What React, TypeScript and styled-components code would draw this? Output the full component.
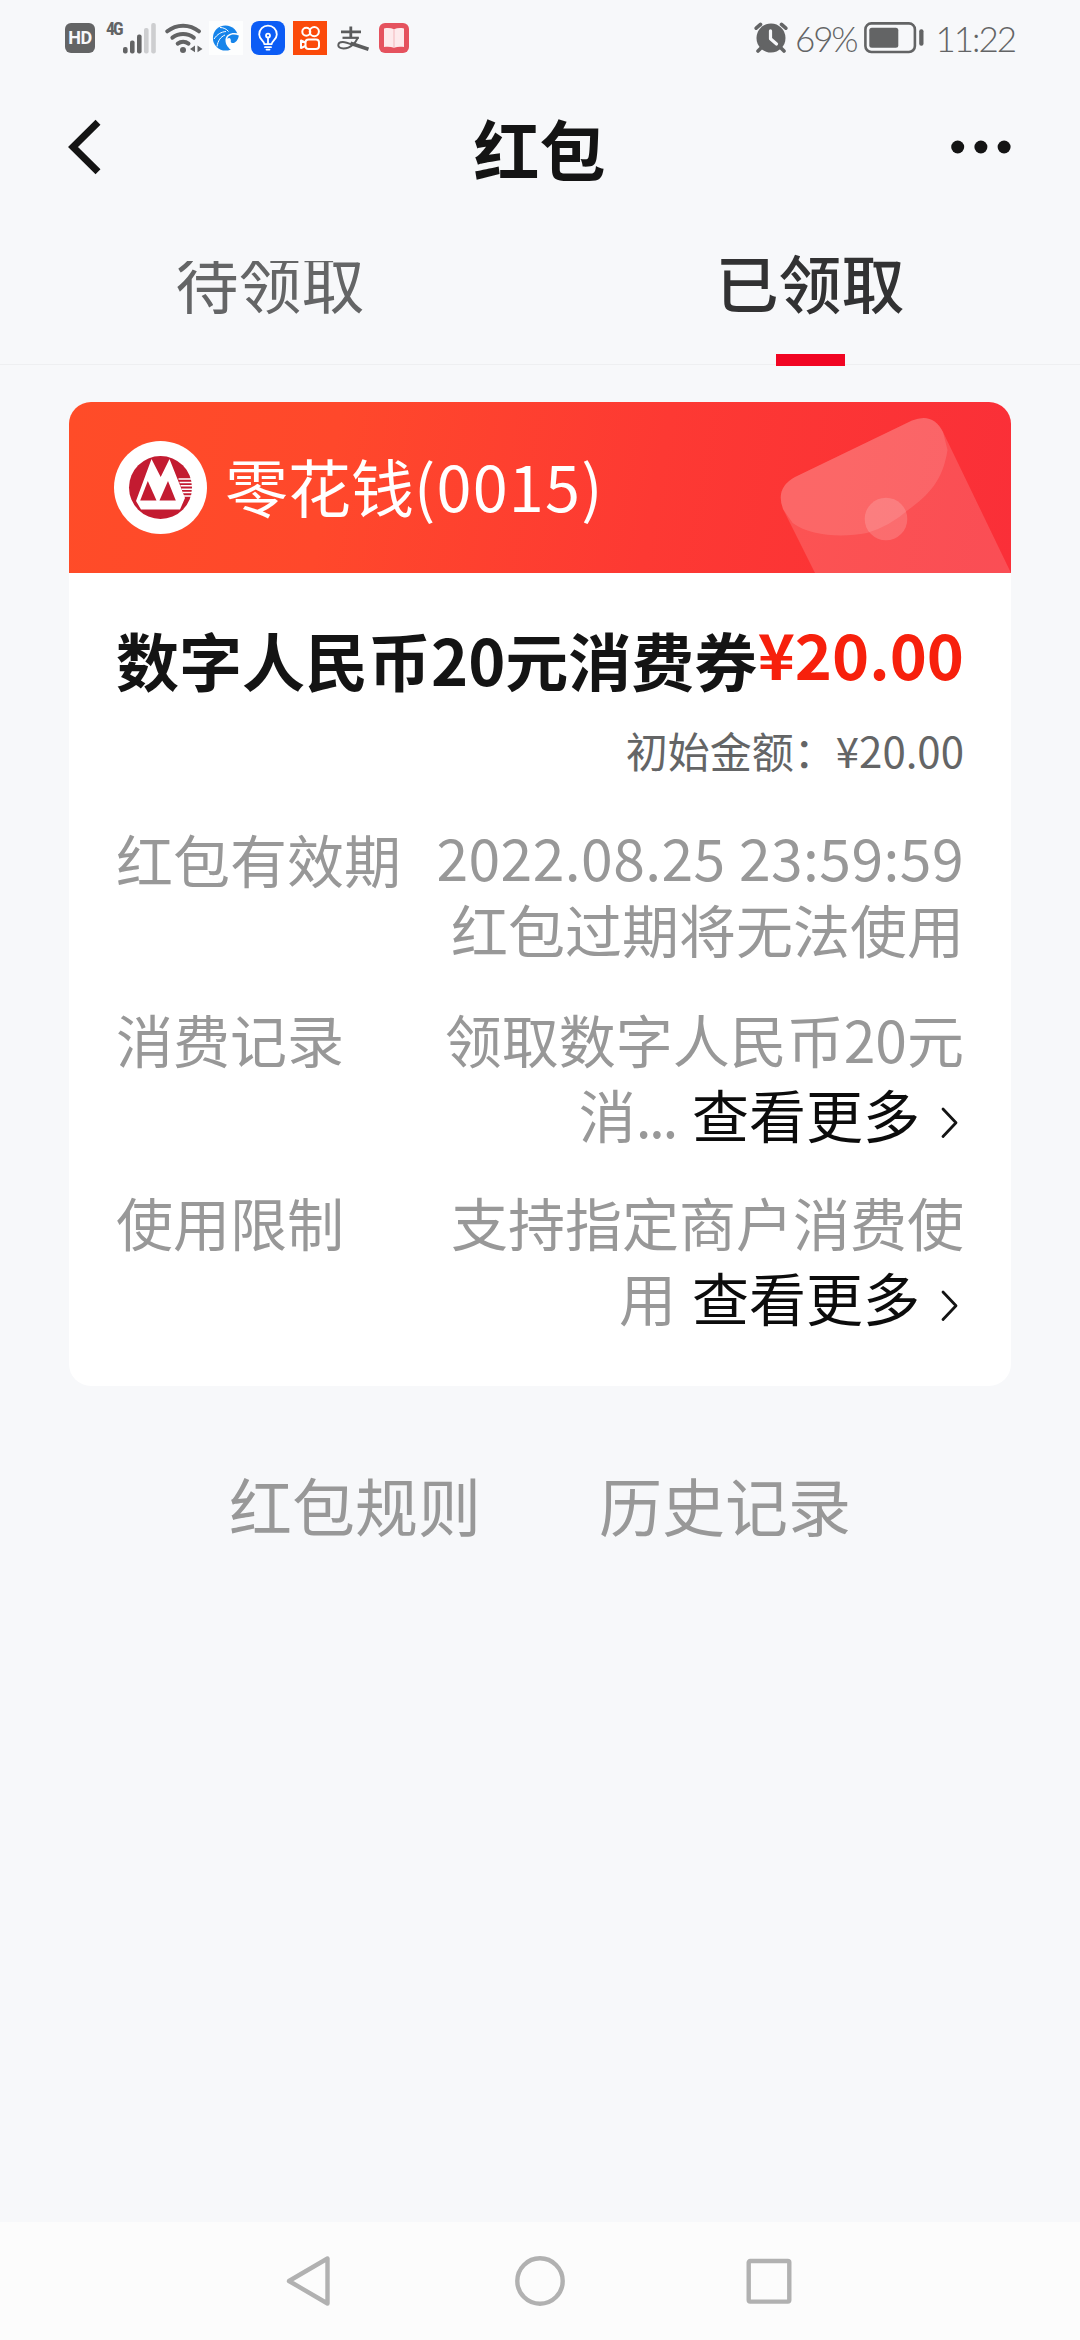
import React from "react";
import styled, { createGlobalStyle } from "styled-components";

const GlobalStyle = createGlobalStyle`
  * { box-sizing: border-box; }
  html, body { margin: 0; padding: 0; background: #f7f8fa; }
  body { font-family: "Noto Sans CJK SC", "Noto Sans", sans-serif; color: #141414; }
  svg { display: block; flex: none; }
`;

const Screen = styled.div`
  display: flex;
  flex-direction: column;
  width: 1080px;
  height: 2340px;
  background: #f7f8fa;
  overflow: hidden;
`;

const StatusBar = styled.header`
  display: flex;
  justify-content: space-between;
  height: 75px;
  padding: 0 65px 0 65px;
  color: #636465;
`;

const StatusGroup = styled.div`
  display: flex;
  align-items: center;
  height: 75px;
`;

const IconSlot = styled.div<{ $gap: number }>`
  margin-left: ${(p) => p.$gap}px;
`;

const StatusText = styled.span<{ $gap: number; $spacing: number }>`
  margin-left: ${(p) => p.$gap}px;
  font-family: "Lato", "Noto Sans CJK SC", sans-serif;
  font-weight: 300;
  font-size: 35px;
  line-height: 75px;
  letter-spacing: ${(p) => p.$spacing}px;
  padding-top: 2px;
  white-space: nowrap;
`;

const HdBadge = styled.div`
  display: flex;
  align-items: center;
  justify-content: center;
  width: 30px;
  height: 30px;
  border-radius: 6px;
  background: #636465;
  color: #f7f8fa;
  font: 700 18px/30px "Roboto", sans-serif;
  letter-spacing: -0.5px;
`;

const NetworkLabel = styled.span`
  align-self: flex-start;
  margin: 20px 0 0 11px;
  width: 17px;
  font: 700 18px/18px "Roboto Condensed", "Roboto", sans-serif;
  letter-spacing: -2px;
`;

const NavBar = styled.nav`
  display: grid;
  grid-template-columns: 1fr auto 1fr;
  align-items: center;
  height: 144px;
  padding: 0 69px 0 68px;
`;

const NavTitle = styled.h1`
  margin: 0;
  font-size: 66px;
  line-height: 144px;
  font-weight: 700;
`;

const NavEnd = styled.div`
  justify-self: end;
`;

const Tabs = styled.div`
  display: grid;
  grid-template-columns: 1fr 1fr;
  height: 146px;
  border-bottom: 1px solid #eeeff1;
`;

const Tab = styled.div<{ $active?: boolean }>`
  display: flex;
  flex-direction: column;
  align-items: center;
  justify-content: space-between;
  padding-top: 42px;
  height: 147px;
  font-size: 63px;
  font-weight: ${(p) => (p.$active ? 500 : 400)};
  color: ${(p) => (p.$active ? "#323233" : "#646566")};
`;

const TabLabel = styled.span<{ $clipped?: boolean }>`
  line-height: 39px;
  padding-bottom: 24px;
  overflow: ${(p) => (p.$clipped ? "hidden" : "visible")};
`;

const TabIndicator = styled.i`
  width: 69px;
  height: 12px;
  background: #f10522;
`;

const Card = styled.section`
  margin: 37px 69px 0;
  height: 984px;
  border-radius: 22px;
  background: #fff;
  overflow: hidden;
`;

const CardHeader = styled.div`
  display: flex;
  align-items: center;
  justify-content: space-between;
  height: 171px;
  padding-left: 45px;
  background: linear-gradient(100deg, #ff4c28 0%, #ff482b 28%, #fd3933 62%, #fa2f38 100%);
`;

const Wallet = styled.div`
  display: flex;
  align-items: center;
  gap: 18px;
`;

const WalletName = styled.span`
  font-size: 63px;
  line-height: 80px;
  padding-bottom: 5px;
  color: #fff;
  white-space: nowrap;
`;

const WalletNumber = styled.span`
  letter-spacing: 1.2px;
`;

const CardBody = styled.div`
  padding: 46px 47px 0;
`;

const TitleRow = styled.div`
  display: flex;
  justify-content: space-between;
  align-items: flex-start;
  height: 80px;
  font-size: 63px;
  font-weight: 700;
  white-space: nowrap;
`;

const CouponTitle = styled.span`
  line-height: 80px;
`;

const Amount = styled.span`
  line-height: 68px;
  color: #f7200c;
`;

const InitialAmount = styled.div`
  margin-top: 21px;
  text-align: right;
  font-size: 42px;
  line-height: 60px;
  color: #646566;
`;

const DetailRow = styled.div<{ $top: number }>`
  display: flex;
  justify-content: space-between;
  margin-top: ${(p) => p.$top}px;
  font-size: 57px;
  color: #989898;
  white-space: nowrap;
`;

const DetailLabel = styled.span<{ $line: number }>`
  line-height: ${(p) => p.$line}px;
`;

const DetailValue = styled.div<{ $line: number }>`
  display: flex;
  flex-direction: column;
  align-items: flex-end;
  line-height: ${(p) => p.$line}px;
`;

const Stamp = styled.span`
  letter-spacing: 0.45px;
`;

const MoreLine = styled.div`
  display: flex;
  align-items: center;
`;

const Ellipsis = styled.span`
  letter-spacing: -2.4px;
`;

const More = styled.span`
  display: flex;
  align-items: center;
  margin-left: 16px;
  color: #0c0c0c;
`;

const FooterLinks = styled.div`
  display: flex;
  justify-content: center;
  gap: 118px;
  margin-top: 78px;
  font-size: 63px;
  line-height: 80px;
  color: #989898;
`;

const SystemNav = styled.footer`
  display: flex;
  align-items: center;
  justify-content: center;
  gap: 180px;
  height: 118px;
  margin-top: auto;
  background: #fcfcfc;
`;

const SignalIcon = () => (
  <svg width="34" height="32" viewBox="0 0 34 32" fill="#636465">
    <rect x="0" y="25" width="4.6" height="6.4" rx="2" />
    <rect x="7" y="18.5" width="4.6" height="13" rx="2" />
    <rect x="14" y="12.5" width="4.6" height="19" rx="2" />
    <rect x="21" y="6" width="4.6" height="25.5" rx="2" fill="#cdced0" />
    <rect x="28.2" y="1" width="4.6" height="30.5" rx="2" fill="#cdced0" />
  </svg>
);

const WifiIcon = () => (
  <svg width="38" height="32" viewBox="0 0 38 32" fill="none" stroke="#636465" strokeWidth="4" strokeLinecap="round">
    <path d="M2.3 9.3a25 25 0 0 1 31.6 0" />
    <path d="M7.4 15.7a17.5 17.5 0 0 1 21.4 0" />
    <path d="M12.7 21.6a9 9 0 0 1 10.8 0" />
    <circle cx="18" cy="28" r="3" fill="#636465" stroke="none" />
    <path d="M30 23.5v6.7l-5-3.3zM32.5 23.5v6.7l5-3.3z" fill="#636465" stroke="none" />
  </svg>
);

const SwirlIcon = () => (
  <svg width="34" height="34" viewBox="0 0 34 34">
    <rect width="34" height="34" fill="#fdfefe" />
    <circle cx="16.500" cy="17" r="12.600" fill="#1584ea" />
    <path d="M31 13.500c-6-3-14-1-14.500 5-.3 5 2.500 8.500 7 11.500L33 27z" fill="#fdfefe" />
    <path d="M29.800 14.500c-5.500-2.500-10.800-.5-11.600 3.200 3-1.800 4 .8 3.600 3.200 2.200 3.200 7.400-.5 8-6.400z" fill="#1584ea" />
    <path d="M5 18c3.500-5 7-7 12-7.500M8 25.500c1-6 3.500-9.500 8-11.500M11 6.500c3.500 0 6.500 1.500 8.500 4" fill="none" stroke="#fdfefe" strokeWidth="1" />
  </svg>
);

const BulbIcon = () => (
  <svg width="34" height="34" viewBox="0 0 34 34" fill="none" stroke="#fff" strokeWidth="1.8" strokeLinecap="round" strokeLinejoin="round">
    <rect width="34" height="34" rx="8" fill="#0c5cf5" stroke="none" />
    <path d="M13.400 23.200c0-3-5.200-4.600-5.200-9.800a8.800 8.800 0 0 1 17.600 0c0 5.200-5.200 6.800-5.200 9.800z" />
    <path d="M14 26.200h6M15.500 28.600h3M17 22.500v-6" />
    <circle cx="17" cy="14.600" r="2" />
  </svg>
);

const CameraIcon = () => (
  <svg width="34" height="34" viewBox="0 0 34 34" fill="none" stroke="#fff" strokeWidth="2" strokeLinejoin="round">
    <rect width="34" height="34" fill="#fb4a0a" stroke="none" />
    <circle cx="13.300" cy="10.800" r="4" />
    <circle cx="21.300" cy="10.600" r="4.600" />
    <rect x="12.500" y="18.500" width="13.500" height="9.500" rx="3" />
    <path d="M12.500 21.500l-4.500-2v7.500l4.500-2" />
  </svg>
);

const AlipayIcon = () => (
  <svg width="32" height="26" viewBox="0 0 32 26" fill="none" stroke="#5b5c5d" strokeLinecap="butt">
    <path d="M13.800 1.500v11.500M4 6.800h20" strokeWidth="2.800" />
    <path d="M5.500 12.800h16.300" strokeWidth="2.200" />
    <path d="M21 12.300C19 17 14 23.500 6.500 23.500 3 23.500 1.300 22 1.300 20.200c0-2.200 2-3.300 4.500-3.300 3.200 0 7 1.700 10 3" strokeWidth="2" />
    <path d="M13.500 18.200L31.500 24.200" strokeWidth="3.600" />
  </svg>
);

const BookIcon = () => (
  <svg width="30" height="30" viewBox="0 0 30 30">
    <rect width="30" height="30" rx="6" fill="#e5525e" />
    <path d="M5 5.500c3.500-.8 7-.6 10 .8 3-1.400 6.500-1.600 10-.8v18.500c-3.500-.6-7-.4-10 .8-3-1.200-6.500-1.400-10-.8z" fill="#fdeaec" />
    <path d="M15 6.300v18.500" stroke="#f3b6bb" strokeWidth="1" />
  </svg>
);

const AlarmIcon = () => (
  <svg width="34" height="31" viewBox="0 0 34 31">
    <circle cx="17" cy="16" r="14.500" fill="#636465" />
    <path d="M2.200 6.200L6.500 2.400M31.800 6.200L27.500 2.400M4 29l4-4M30 29l-4-4" stroke="#636465" strokeWidth="3.600" strokeLinecap="round" />
    <path d="M16.500 8.800v8l6 5.200" stroke="#f7f8fa" strokeWidth="3.200" strokeLinecap="round" strokeLinejoin="round" fill="none" />
  </svg>
);

const BatteryIcon = () => (
  <svg width="60" height="32" viewBox="0 0 60 32">
    <rect x="1.400" y="1.400" width="49.500" height="28.600" rx="6" fill="none" stroke="#636465" strokeWidth="2.600" />
    <rect x="5.300" y="5.800" width="29" height="20" rx="2.500" fill="#636465" />
    <rect x="55.200" y="7.300" width="4.300" height="16.500" rx="2" fill="#636465" />
  </svg>
);

const BackIcon = () => (
  <svg width="34" height="56" viewBox="0 0 34 56" fill="none" stroke="#141414" strokeWidth="7">
    <path d="M30 3.200L5 28l25 24.800" />
  </svg>
);

const DotsIcon = () => (
  <svg width="60" height="14" viewBox="0 0 60 14" fill="#141414">
    <circle cx="6.700" cy="7" r="6.500" />
    <circle cx="29.900" cy="7" r="6.500" />
    <circle cx="53.100" cy="7" r="6.500" />
  </svg>
);

const BankLogo = () => (
  <svg width="93" height="93" viewBox="0 0 93 93">
    <circle cx="46.500" cy="46.500" r="46.500" fill="#fff" />
    <circle cx="46.500" cy="46.500" r="31.500" fill="#c31b31" />
    <path d="M37.500 18L46.700 36 55.500 18 71 57l-5 11.500H27L22 60z" fill="#fff" />
    <path d="M33.800 40L42.500 59.500H26.200z" fill="#c31b31" />
    <path d="M40 39.500L44.200 51 46.600 43 42.500 36z" fill="#fff" />
    <path d="M54 40L61.800 59.500H45.500z" fill="#c31b31" />
    <path d="M64.500 38H78M65.500 41.400H78M66.500 44.800H78M67.500 48.200H78M68.500 51.600H78M69.500 55H77" stroke="#fff" strokeWidth="1.500" />
  </svg>
);

const EnvelopeArt = () => (
  <svg width="311" height="171" viewBox="0 0 311 171" fill="#fff">
    <path
      d="M115 171L83 107Q75 86 95 75L212 18.500Q233 10 243 30L311 171z"
      fillOpacity="0.150"
    />
    <path
      d="M92.700 121L83 107Q75 86 95 75L212 18.500Q233 10 243 30L247.500 48C243 78 229 93 208 108Q190 124 167 131C142 136 110 134 92.700 121z"
      fillOpacity="0.120"
    />
    <circle cx="186" cy="117" r="21.300" fillOpacity="0.160" />
  </svg>
);

const ChevronIcon = () => (
  <svg width="44" height="50" viewBox="0 0 44 50" fill="none" stroke="#141414" strokeWidth="2.800" strokeLinecap="round" strokeLinejoin="round">
    <path d="M23 20L36 33.800 23 47.500" />
  </svg>
);

const BackKey = () => (
  <svg width="50" height="52" viewBox="0 0 50 52" fill="none" stroke="#b1b1b1" strokeWidth="4.400" strokeLinejoin="round">
    <path d="M42.500 3.500v45L4 26z" />
  </svg>
);

const HomeKey = () => (
  <svg width="50" height="52" viewBox="0 0 50 52" fill="none" stroke="#b1b1b1" strokeWidth="4.400">
    <circle cx="25" cy="26" r="22.700" />
  </svg>
);

const RecentKey = () => (
  <svg width="50" height="52" viewBox="0 0 50 52" fill="none" stroke="#b1b1b1" strokeWidth="4.400">
    <rect x="3.700" y="6" width="40.600" height="40.600" rx="1.500" />
  </svg>
);

const MoreLink = () => (
  <More>
    查看更多
    <ChevronIcon />
  </More>
);

export default function App() {
  return (
    <Screen>
      <GlobalStyle />
      <StatusBar>
        <StatusGroup>
          <HdBadge>HD</HdBadge>
          <NetworkLabel>4G</NetworkLabel>
          <SignalIcon />
          <IconSlot $gap={8}><WifiIcon /></IconSlot>
          <IconSlot $gap={6}><SwirlIcon /></IconSlot>
          <IconSlot $gap={8}><BulbIcon /></IconSlot>
          <IconSlot $gap={8}><CameraIcon /></IconSlot>
          <IconSlot $gap={10}><AlipayIcon /></IconSlot>
          <IconSlot $gap={10}><BookIcon /></IconSlot>
        </StatusGroup>
        <StatusGroup>
          <AlarmIcon />
          <StatusText $gap={7} $spacing={-2.2}>69%</StatusText>
          <IconSlot $gap={8}><BatteryIcon /></IconSlot>
          <StatusText $gap={11} $spacing={-2}>11:22</StatusText>
        </StatusGroup>
      </StatusBar>

      <NavBar>
        <BackIcon />
        <NavTitle>红包</NavTitle>
        <NavEnd><DotsIcon /></NavEnd>
      </NavBar>

      <Tabs>
        <Tab>
          <TabLabel $clipped>待领取</TabLabel>
        </Tab>
        <Tab $active>
          <TabLabel>已领取</TabLabel>
          <TabIndicator />
        </Tab>
      </Tabs>

      <Card>
        <CardHeader>
          <Wallet>
            <BankLogo />
            <WalletName>
              零花钱<WalletNumber>(0015)</WalletNumber>
            </WalletName>
          </Wallet>
          <EnvelopeArt />
        </CardHeader>
        <CardBody>
          <TitleRow>
            <CouponTitle>数字人民币20元消费券</CouponTitle>
            <Amount>¥20.00</Amount>
          </TitleRow>
          <InitialAmount>初始金额：¥20.00</InitialAmount>
          <DetailRow $top={40}>
            <DetailLabel $line={77}>红包有效期</DetailLabel>
            <DetailValue $line={72}>
              <Stamp>2022.08.25 23:59:59</Stamp>
              <span>红包过期将无法使用</span>
            </DetailValue>
          </DetailRow>
          <DetailRow $top={37}>
            <DetailLabel $line={75}>消费记录</DetailLabel>
            <DetailValue $line={75}>
              <span>领取数字人民币20元</span>
              <MoreLine>
                消<Ellipsis>...</Ellipsis>
                <MoreLink />
              </MoreLine>
            </DetailValue>
          </DetailRow>
          <DetailRow $top={33}>
            <DetailLabel $line={75}>使用限制</DetailLabel>
            <DetailValue $line={75}>
              <span>支持指定商户消费使</span>
              <MoreLine>
                用
                <MoreLink />
              </MoreLine>
            </DetailValue>
          </DetailRow>
        </CardBody>
      </Card>

      <FooterLinks>
        <span>红包规则</span>
        <span>历史记录</span>
      </FooterLinks>

      <SystemNav>
        <BackKey />
        <HomeKey />
        <RecentKey />
      </SystemNav>
    </Screen>
  );
}
